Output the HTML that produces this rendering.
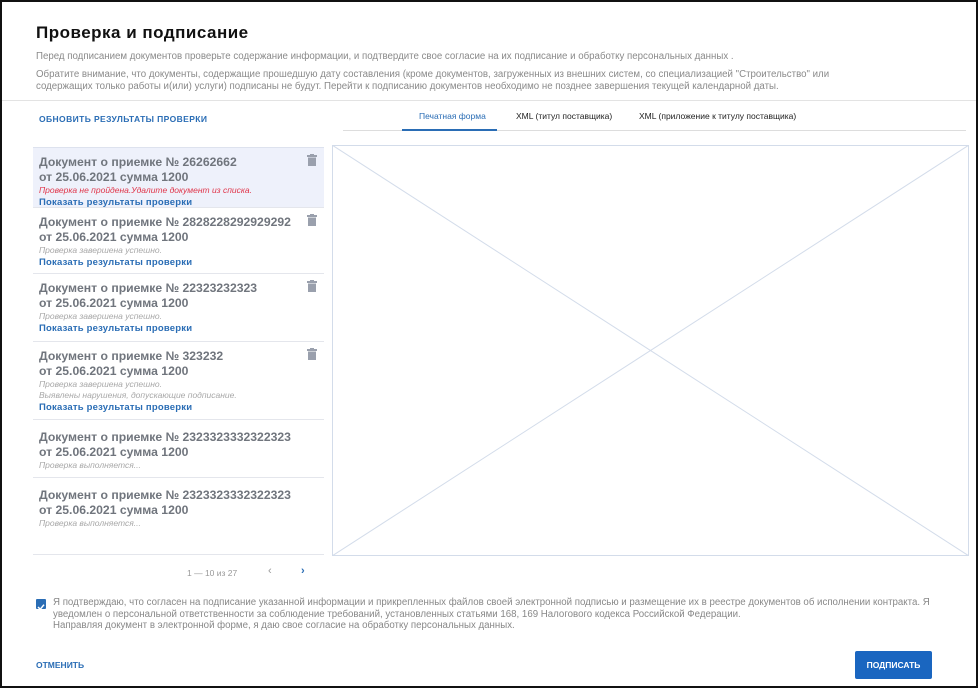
<!DOCTYPE html>
<html><head><meta charset="utf-8"><style>
*{margin:0;padding:0;box-sizing:border-box}
body{width:978px;height:688px;font-family:"Liberation Sans",sans-serif;background:#fff;position:relative;overflow:hidden}
.frame{position:absolute;left:0;top:0;width:978px;height:688px;border:2px solid #111}
.a{position:absolute;white-space:nowrap}
.g{color:#8a8a8a;font-size:9.7px}
.it{position:absolute;left:33px;width:291px;border-bottom:1px solid #e4e6ec;padding:7px 0 0 6px}
.it .t{font-size:12.2px;font-weight:bold;color:#70757d;line-height:15px}
.it .s{font-size:8.5px;font-style:italic;color:#a8a8a8;line-height:11px}
.it .l{font-size:9.5px;font-weight:bold;color:#2a6db5;line-height:13px;letter-spacing:.2px}
.tr{position:absolute;right:7px;top:6px;width:10px;height:12px}
</style></head><body>
<div class="frame"></div>
<div class="a" style="left:36px;top:23px;font-size:17px;font-weight:bold;color:#111;letter-spacing:.5px">Проверка и подписание</div>
<div class="a g" style="left:36px;top:51px">Перед подписанием документов проверьте содержание информации, и подтвердите свое согласие на их подписание и обработку персональных данных .</div>
<div class="a g" style="left:36px;top:69px;line-height:12px">Обратите внимание, что документы, содержащие прошедшую дату составления (кроме документов, загруженных из внешних систем, со специализацией "Строительство" или<br>содержащих только работы и(или) услуги)  подписаны не будут. Перейти к подписанию документов необходимо не позднее завершения текущей календарной даты.</div>
<div class="a" style="left:2px;top:100px;width:974px;height:1px;background:#e3e3e3"></div>
<div class="a" style="left:39px;top:114px;font-size:8.5px;font-weight:bold;color:#2a6db5;letter-spacing:.4px">ОБНОВИТЬ РЕЗУЛЬТАТЫ ПРОВЕРКИ</div>
<div class="a" style="left:419px;top:111px;font-size:8.5px;color:#2a6db5">Печатная форма</div>
<div class="a" style="left:516px;top:111px;font-size:8.5px;color:#222">XML (титул поставщика)</div>
<div class="a" style="left:639px;top:111px;font-size:8.5px;color:#222">XML (приложение к титулу поставщика)</div>
<div class="a" style="left:343px;top:130px;width:623px;height:1px;background:#ddd"></div>
<div class="a" style="left:402px;top:129px;width:95px;height:2px;background:#2a6db5"></div>

<div class="it" style="top:147px;height:61px;background:#eef1fb;border-top:1px solid #dde2ee"><div class="t">Документ о приемке № 26262662<br>от 25.06.2021 сумма 1200</div><div class="s" style="color:#e0364b">Проверка не пройдена.Удалите документ из списка.</div><div class="l">Показать результаты проверки</div><svg class="tr" viewBox="0 0 10 12"><rect x="0" y="1" width="10" height="2" fill="#9aa0ad"/><rect x="3" y="0" width="4" height="2" fill="#9aa0ad"/><rect x="1" y="3.5" width="8" height="8.5" fill="#9aa0ad"/></svg></div>
<div class="it" style="top:208px;height:66px"><div class="t">Документ о приемке № 2828228292929292<br>от 25.06.2021 сумма 1200</div><div class="s">Проверка завершена успешно.</div><div class="l">Показать результаты проверки</div><svg class="tr" viewBox="0 0 10 12"><rect x="0" y="1" width="10" height="2" fill="#9aa0ad"/><rect x="3" y="0" width="4" height="2" fill="#9aa0ad"/><rect x="1" y="3.5" width="8" height="8.5" fill="#9aa0ad"/></svg></div>
<div class="it" style="top:274px;height:68px"><div class="t">Документ о приемке № 22323232323<br>от 25.06.2021 сумма 1200</div><div class="s">Проверка завершена успешно.</div><div class="l">Показать результаты проверки</div><svg class="tr" viewBox="0 0 10 12"><rect x="0" y="1" width="10" height="2" fill="#9aa0ad"/><rect x="3" y="0" width="4" height="2" fill="#9aa0ad"/><rect x="1" y="3.5" width="8" height="8.5" fill="#9aa0ad"/></svg></div>
<div class="it" style="top:342px;height:78px"><div class="t">Документ о приемке № 323232<br>от 25.06.2021 сумма 1200</div><div class="s">Проверка завершена успешно.<br>Выявлены нарушения, допускающие подписание.</div><div class="l">Показать результаты проверки</div><svg class="tr" viewBox="0 0 10 12"><rect x="0" y="1" width="10" height="2" fill="#9aa0ad"/><rect x="3" y="0" width="4" height="2" fill="#9aa0ad"/><rect x="1" y="3.5" width="8" height="8.5" fill="#9aa0ad"/></svg></div>
<div class="it" style="top:420px;height:58px;padding-top:10px"><div class="t">Документ о приемке № 2323323332322323<br>от 25.06.2021 сумма 1200</div><div class="s">Проверка выполняется...</div></div>
<div class="it" style="top:478px;height:77px;padding-top:10px"><div class="t">Документ о приемке № 2323323332322323<br>от 25.06.2021 сумма 1200</div><div class="s">Проверка выполняется...</div></div>

<svg class="a" style="left:332px;top:145px" width="637" height="411"><rect x="0.5" y="0.5" width="636" height="410" fill="none" stroke="#d3dcea"/><line x1="0" y1="0" x2="637" y2="411" stroke="#d3dcea"/><line x1="637" y1="0" x2="0" y2="411" stroke="#d3dcea"/></svg>

<div class="a" style="left:187px;top:568px;font-size:8.5px;color:#999">1 — 10 из 27</div>
<div class="a" style="left:268px;top:565px;font-size:11px;color:#999">‹</div>
<div class="a" style="left:301px;top:565px;font-size:11px;color:#2a6db5;font-weight:bold">›</div>

<div class="a" style="left:36px;top:599px;width:10px;height:10px;background:#2a6db5;border-radius:1px"><svg width="10" height="10"><path d="M2 5 L4.2 7.3 L8 2.7" stroke="#fff" stroke-width="1.5" fill="none"/></svg></div>
<div class="a" style="left:53px;top:597px;font-size:9.7px;color:#888;line-height:11.5px">Я подтверждаю, что согласен на подписание указанной информации и прикрепленных файлов своей электронной подписью и размещение их в реестре документов об исполнении контракта. Я<br>уведомлен о персональной ответственности за соблюдение требований, установленных статьями 168, 169 Налогового кодекса Российской Федерации.<br>Направляя документ в электронной форме, я даю свое согласие на обработку персональных данных.</div>

<div class="a" style="left:36px;top:660px;font-size:8.5px;font-weight:bold;color:#2a6db5">ОТМЕНИТЬ</div>
<div class="a" style="left:855px;top:651px;width:77px;height:28px;background:#1a66c0;border-radius:2px;color:#fff;font-size:8.5px;font-weight:bold;text-align:center;line-height:28px">ПОДПИСАТЬ</div>
</body></html>
